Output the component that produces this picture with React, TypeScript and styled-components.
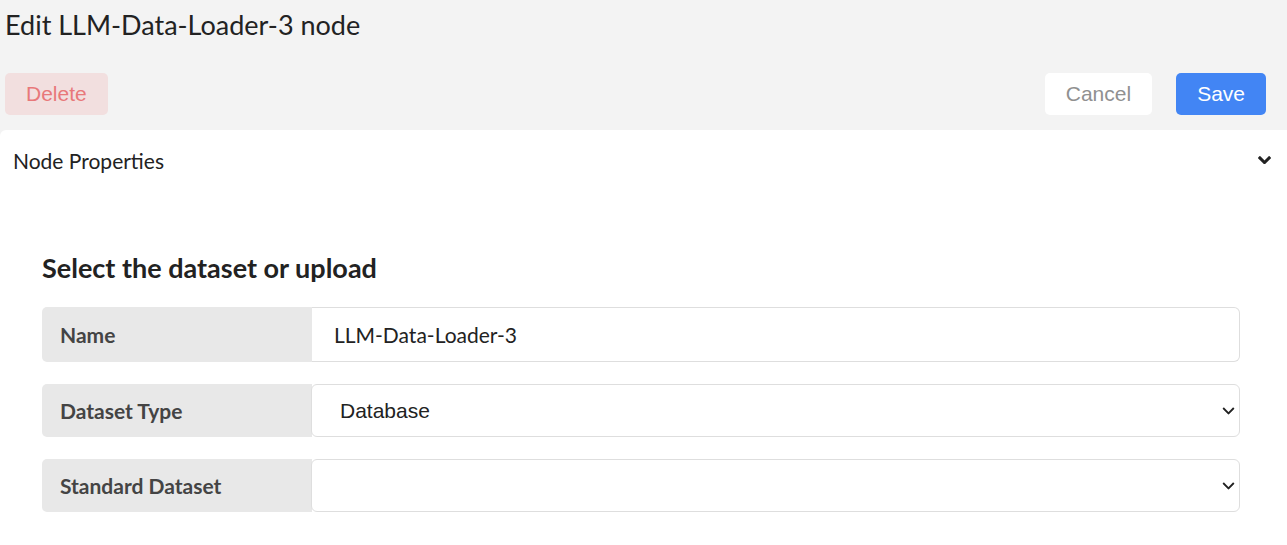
import styled, { createGlobalStyle } from 'styled-components';

const Global = createGlobalStyle`
  html, body {
    margin: 0;
    padding: 0;
    background: #f3f3f3;
  }
  body {
    font-family: Lato, "Liberation Sans", sans-serif;
    color: #222;
  }
`;

const Header = styled.header`
  background: #f3f3f3;
  padding: 8px 21px 15px 5px;
`;

const Title = styled.h1`
  margin: 0;
  font-size: 27px;
  font-weight: 400;
  line-height: 34px;
  color: #222;
`;

const Actions = styled.div`
  display: flex;
  align-items: center;
  margin-top: 31px;
  gap: 24px;

  .spacer {
    flex: 1;
  }
`;

const Button = styled.button<{ $variant: 'danger' | 'plain' | 'primary' }>`
  font-family: "Liberation Sans", Arial, sans-serif;
  font-size: 21px;
  height: 42px;
  padding: 0 21px;
  border: none;
  border-radius: 5px;
  cursor: pointer;
  background: ${p => p.$variant === 'danger' ? '#f2dfdf' : p.$variant === 'primary' ? '#4285f4' : '#ffffff'};
  color: ${p => p.$variant === 'danger' ? '#e8787a' : p.$variant === 'primary' ? '#ffffff' : '#909090'};
`;

const Panel = styled.section`
  background: #fff;
  border-radius: 6px 0 0 0;
  min-height: 415px;
`;

const PanelHead = styled.div`
  display: flex;
  align-items: center;
  justify-content: space-between;
  height: 60px;
  padding: 0 16px 0 13px;
  font-size: 21px;
  color: #222;
`;

const Body = styled.div`
  padding: 59px 47px 20px 42px;
`;

const Heading = styled.h2`
  margin: 0 0 20px;
  font-size: 27px;
  font-weight: 700;
  line-height: 38px;
  color: #222;
`;

const Rows = styled.div`
  display: flex;
  flex-direction: column;
  gap: 22px;
`;

const Row = styled.div<{ $h: number }>`
  display: flex;
  height: ${p => p.$h}px;
`;

const Label = styled.div`
  flex: 0 0 270px;
  display: flex;
  align-items: center;
  padding-left: 18px;
  box-sizing: border-box;
  background: #e8e8e8;
  border-radius: 5px 0 0 5px;
  font-size: 21px;
  font-weight: 700;
  color: #444;
`;

const Input = styled.input`
  flex: 1;
  min-width: 0;
  box-sizing: border-box;
  border: 1px solid #dedede;
  border-left: none;
  border-radius: 0 6px 6px 0;
  padding: 0 22px;
  font-family: Lato, sans-serif;
  font-size: 21px;
  color: #222;
  outline: none;
`;

const SelectWrap = styled.div`
  flex: 1;
  position: relative;
  display: flex;

  svg {
    position: absolute;
    right: 5px;
    top: 50%;
    transform: translateY(-50%);
    pointer-events: none;
  }
`;

const Select = styled.select`
  flex: 1;
  appearance: none;
  box-sizing: border-box;
  background: #fff;
  border: 1px solid #dedede;
  border-radius: 6px;
  margin-left: -1px;
  padding: 0 28px;
  font-family: "Liberation Sans", Arial, sans-serif;
  font-size: 21px;
  color: #222;
  outline: none;
`;

function Chevron({ size = 14, stroke = 2 }: { size?: number; stroke?: number }) {
  return (
    <svg width={size} height={size * 0.65} viewBox="0 0 14 9" fill="none">
      <path d="M2 2 L7 7 L12 2" stroke="#222" strokeWidth={stroke} strokeLinecap="square" />
    </svg>
  );
}

function SelectField({ value, options }: { value: string; options: string[] }) {
  return (
    <SelectWrap>
      <Select defaultValue={value}>
        {options.map(o => <option key={o} value={o}>{o}</option>)}
      </Select>
      <Chevron size={13} stroke={2} />
    </SelectWrap>
  );
}

export default function App() {
  return (
    <>
      <Global />
      <Header>
        <Title>Edit LLM-Data-Loader-3 node</Title>
        <Actions>
          <Button $variant="danger">Delete</Button>
          <span className="spacer" />
          <Button $variant="plain">Cancel</Button>
          <Button $variant="primary">Save</Button>
        </Actions>
      </Header>
      <Panel>
        <PanelHead>
          <span>Node Properties</span>
          <Chevron size={13} stroke={3.2} />
        </PanelHead>
        <Body>
          <Heading>Select the dataset or upload</Heading>
          <Rows>
            <Row $h={55}>
              <Label>Name</Label>
              <Input defaultValue="LLM-Data-Loader-3" />
            </Row>
            <Row $h={53}>
              <Label>Dataset Type</Label>
              <SelectField value="Database" options={['Database', 'File', 'Standard']} />
            </Row>
            <Row $h={53}>
              <Label>Standard Dataset</Label>
              <SelectField value="" options={['']} />
            </Row>
          </Rows>
        </Body>
      </Panel>
    </>
  );
}
